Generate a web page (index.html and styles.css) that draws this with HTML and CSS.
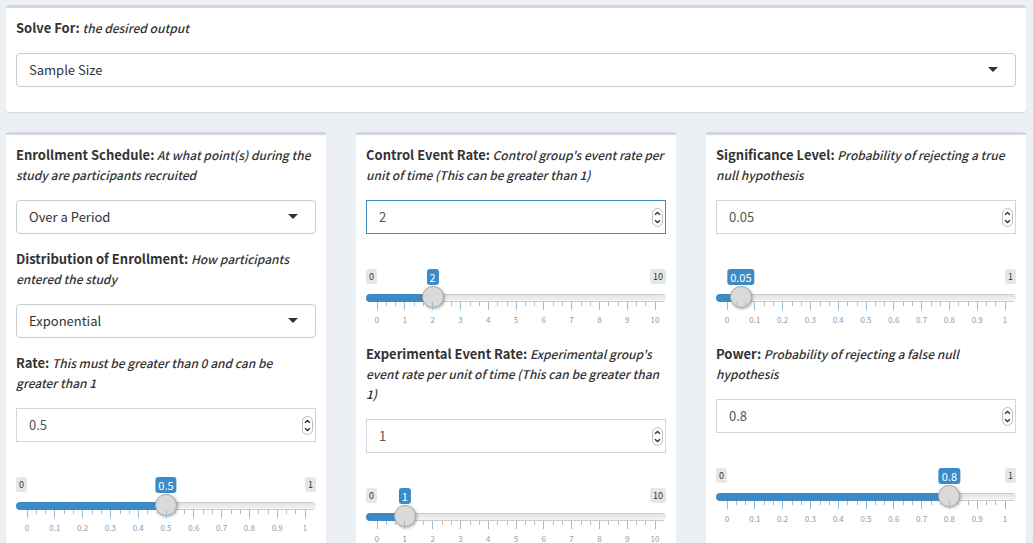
FILE: index.html
```
<!DOCTYPE html>
<html lang="en">
<head>
<meta charset="utf-8">
<title>Sample Size Calculator</title>
<link rel="stylesheet" href="styles.css">
</head>
<body>
<svg class="defs" aria-hidden="true">
  <symbol id="ticks" viewBox="0 0 279 8" preserveAspectRatio="none">
    <path class="minor" d="M9.5 0v4M18.5 0v4M37.5 0v4M46.5 0v4M65.5 0v4M74.5 0v4M93.5 0v4M102.5 0v4M120.5 0v4M130.5 0v4M148.5 0v4M157.5 0v4M176.5 0v4M185.5 0v4M204.5 0v4M213.5 0v4M231.5 0v4M241.5 0v4M259.5 0v4M268.5 0v4"/>
    <path class="major" d="M.5 0v8M27.5 0v8M55.5 0v8M83.5 0v8M111.5 0v8M139.5 0v8M166.5 0v8M194.5 0v8M222.5 0v8M250.5 0v8M278.5 0v8"/>
  </symbol>
  <symbol id="spin" viewBox="0 0 11 19">
    <rect x=".5" y=".5" width="10" height="18" rx="5" fill="#fff" stroke="#bbb"/>
    <path d="M3 6.8 5.5 4.5 8 6.8M3 12.2l2.5 2.3L8 12.2" fill="none" stroke="#333" stroke-width="1.4"/>
  </symbol>
  <symbol id="caret" viewBox="0 0 10 5"><path d="M0 0h10L5 5z" fill="#333"/></symbol>
</svg>
<main class="page">
  <section class="box">
    <div class="group">
      <label for="solve"><b>Solve For:</b><i> the desired output</i></label>
      <div class="field"><select id="solve"><option>Sample Size</option></select><svg class="caret"><use href="#caret"/></svg></div>
    </div>
  </section>
  <div class="columns">
    <section class="box">
      <div class="group">
        <label for="schedule"><b>Enrollment Schedule:</b><i> At what point(s) during the study are participants recruited</i></label>
        <div class="field"><select id="schedule"><option>Over a Period</option></select><svg class="caret"><use href="#caret"/></svg></div>
      </div>
      <div class="group">
        <label for="dist"><b>Distribution of Enrollment:</b><i> How participants entered the study</i></label>
        <div class="field"><select id="dist"><option>Exponential</option></select><svg class="caret"><use href="#caret"/></svg></div>
      </div>
      <div class="group">
        <label for="rate"><b>Rate:</b><i> This must be greater than 0 and can be greater than 1</i></label>
        <div class="field"><input id="rate" type="number" step="0.1" value="0.5"><svg class="spin"><use href="#spin"/></svg></div>
      </div>
      <div class="slider" style="--p:0.5">
        <div class="ends"><span>0</span><span>1</span></div>
        <div class="rail"><output>0.5</output></div>
        <input type="range" aria-label="Rate" min="0" max="1" step="0.01" value="0.5">
        <svg class="ticks"><use href="#ticks"/></svg>
        <div class="scale"><span>0</span><span>0.1</span><span>0.2</span><span>0.3</span><span>0.4</span><span>0.5</span><span>0.6</span><span>0.7</span><span>0.8</span><span>0.9</span><span>1</span></div>
      </div>
    </section>
    <section class="box">
      <div class="group">
        <label for="control"><b>Control Event Rate:</b><i> Control group's event rate per unit of time (This can be greater than 1)</i></label>
        <div class="field"><input id="control" class="active" type="number" value="2"><svg class="spin"><use href="#spin"/></svg></div>
      </div>
      <div class="slider" style="--p:0.2">
        <div class="ends"><span>0</span><span>10</span></div>
        <div class="rail"><output>2</output></div>
        <input type="range" aria-label="Control Event Rate" min="0" max="10" step="0.1" value="2">
        <svg class="ticks"><use href="#ticks"/></svg>
        <div class="scale"><span>0</span><span>1</span><span>2</span><span>3</span><span>4</span><span>5</span><span>6</span><span>7</span><span>8</span><span>9</span><span>10</span></div>
      </div>
      <div class="group">
        <label for="exper"><b>Experimental Event Rate:</b><i> Experimental group's event rate per unit of time (This can be greater than 1)</i></label>
        <div class="field"><input id="exper" type="number" value="1"><svg class="spin"><use href="#spin"/></svg></div>
      </div>
      <div class="slider" style="--p:0.1">
        <div class="ends"><span>0</span><span>10</span></div>
        <div class="rail"><output>1</output></div>
        <input type="range" aria-label="Experimental Event Rate" min="0" max="10" step="0.1" value="1">
        <svg class="ticks"><use href="#ticks"/></svg>
        <div class="scale"><span>0</span><span>1</span><span>2</span><span>3</span><span>4</span><span>5</span><span>6</span><span>7</span><span>8</span><span>9</span><span>10</span></div>
      </div>
    </section>
    <section class="box">
      <div class="group">
        <label for="alpha"><b>Significance Level:</b><i> Probability of rejecting a true null hypothesis</i></label>
        <div class="field"><input id="alpha" type="number" step="0.01" value="0.05"><svg class="spin"><use href="#spin"/></svg></div>
      </div>
      <div class="slider" style="--p:0.05">
        <div class="ends last"><span>1</span></div>
        <div class="rail"><output>0.05</output></div>
        <input type="range" aria-label="Significance Level" min="0" max="1" step="0.01" value="0.05">
        <svg class="ticks"><use href="#ticks"/></svg>
        <div class="scale"><span>0</span><span>0.1</span><span>0.2</span><span>0.3</span><span>0.4</span><span>0.5</span><span>0.6</span><span>0.7</span><span>0.8</span><span>0.9</span><span>1</span></div>
      </div>
      <div class="group">
        <label for="power"><b>Power:</b><i> Probability of rejecting a false null hypothesis</i></label>
        <div class="field"><input id="power" type="number" step="0.1" value="0.8"><svg class="spin"><use href="#spin"/></svg></div>
      </div>
      <div class="slider" style="--p:0.8">
        <div class="ends"><span>0</span><span>1</span></div>
        <div class="rail"><output>0.8</output></div>
        <input type="range" aria-label="Power" min="0" max="1" step="0.01" value="0.8">
        <svg class="ticks"><use href="#ticks"/></svg>
        <div class="scale"><span>0</span><span>0.1</span><span>0.2</span><span>0.3</span><span>0.4</span><span>0.5</span><span>0.6</span><span>0.7</span><span>0.8</span><span>0.9</span><span>1</span></div>
      </div>
    </section>
  </div>
</main>
</body>
</html>
```
FILE: styles.css
```
* { box-sizing: border-box; }
body {
  margin: 0;
  background: #ecf0f5;
  color: #333;
  font: 13px/20px "Source Sans Pro", "Noto Sans CJK SC", "Noto Sans", sans-serif;
}
.defs { position: absolute; width: 0; height: 0; }
.page { padding: 5px 7px 20px 6px; }
.box {
  background: #fff;
  border-top: 3px solid #d2d6de;
  border-radius: 3px;
  box-shadow: 0 1px 1px rgba(0, 0, 0, .1);
  padding: 10px;
}
.columns {
  display: grid;
  grid-template-columns: repeat(3, minmax(0, 1fr));
  gap: 30px;
  margin-top: 20px;
}
.group { margin-bottom: 15px; }
label { display: block; margin-bottom: 15px; }
label b { font-weight: 700; }
label i { font-size: 12px; font-weight: 500; }

.field { position: relative; }
select, .field input {
  display: block;
  width: 100%;
  height: 34px;
  margin: 0;
  padding: 0 12px;
  font: inherit;
  color: #333;
  background: #fff;
  border: 1px solid #ccc;
  border-radius: 4px;
  appearance: none;
  outline: none;
}
.field input {
  padding-bottom: 1px;
  color: #555;
  border-color: #d2d6de;
  border-radius: 0;
  appearance: textfield;
}
.field input.active { border-color: #3c8dbc; }
.field input::-webkit-inner-spin-button { appearance: none; margin: 0; }
.caret, .spin { position: absolute; pointer-events: none; }
.caret { right: 18px; top: 14px; width: 10px; height: 5px; }
.spin { right: 3px; top: 8px; width: 11px; height: 19px; }

.slider {
  position: relative;
  height: 60px;
  margin: 35px 0 15px;
}
.ends {
  display: flex;
  justify-content: space-between;
  height: 17px;
}
.ends.last { justify-content: flex-end; }
.ends span {
  height: 15px;
  padding: 0 3px;
  border-radius: 3px;
  background: #e6e6e6;
  font-size: 9px;
  line-height: 15px;
}
.rail { position: absolute; top: 0; left: 11px; right: 11px; }
.rail output {
  position: absolute;
  left: calc(var(--p) * 100%);
  transform: translateX(-50%);
  padding: 0 3px;
  border-radius: 3px;
  background: #3d8bc6;
  color: #fff;
  font-size: 11px;
  line-height: 16px;
}
input[type="range"] {
  display: block;
  width: 100%;
  height: 24px;
  margin: 0;
  appearance: none;
  background: none;
}
input[type="range"]::-webkit-slider-runnable-track {
  height: 8px;
  border-radius: 4px;
  background: linear-gradient(90deg, #3d8bc6 calc(11px + var(--p) * (100% - 22px)), transparent 0),
    linear-gradient(#ccc 1px, #e2e2e2 1px, #f5f5f5 7px, #ccc 7px);
}
input[type="range"]::-webkit-slider-thumb {
  appearance: none;
  width: 22px;
  height: 22px;
  margin-top: -8px;
  border: 1px solid #aaa;
  border-radius: 50%;
  background: #dadada;
  box-shadow: 1px 1px 3px rgba(0, 0, 0, .3);
}
.ticks {
  display: block;
  width: calc(100% - 21px);
  height: 8px;
  margin: -8px 10px 0 11px;
  shape-rendering: crispEdges;
}
.minor { stroke: #bbb; }
.major { stroke: #93bfe0; }
.scale {
  display: flex;
  justify-content: space-between;
  margin: 4px 11px 0;
  color: #999;
  font-size: 8px;
  line-height: 12px;
}
.scale span { display: flex; justify-content: center; width: 0; }
```
